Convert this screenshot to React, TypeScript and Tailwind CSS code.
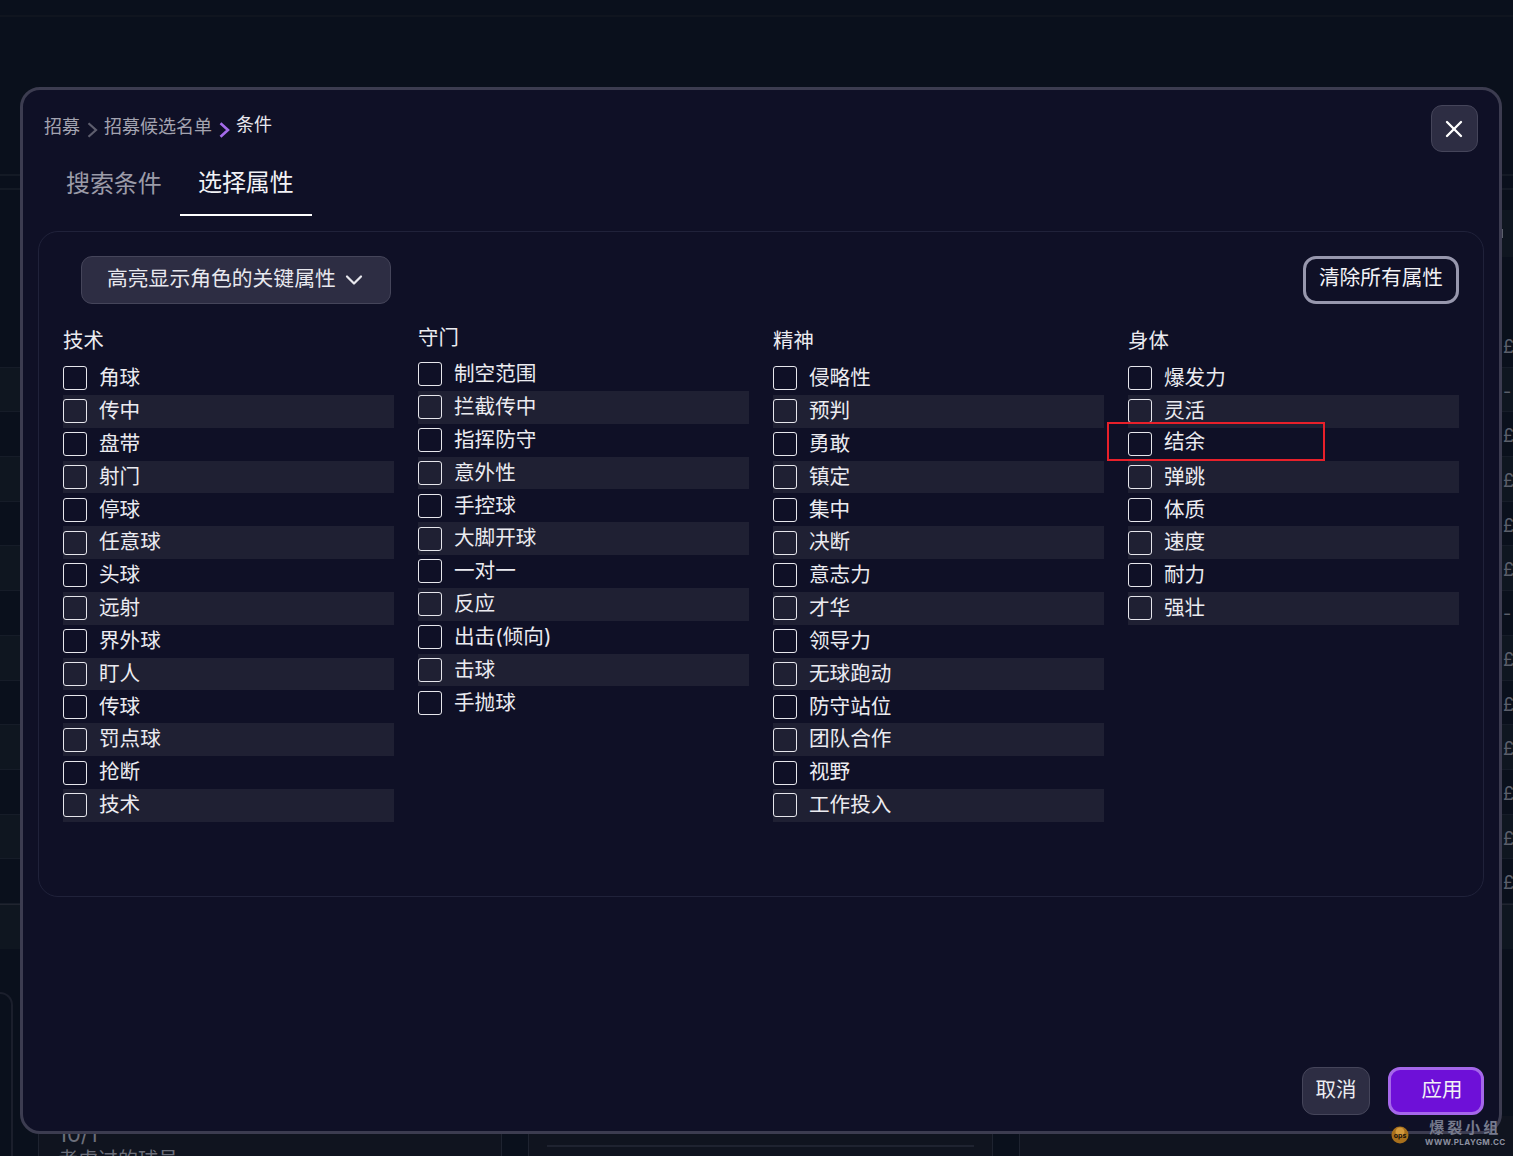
import { X, ChevronDown } from 'lucide-react'

const FONT = '"Inter", "Noto Sans CJK SC", sans-serif'

const COLUMNS = [
  {
    title: '技术',
    shift: false,
    items: ['角球', '传中', '盘带', '射门', '停球', '任意球', '头球', '远射', '界外球', '盯人', '传球', '罚点球', '抢断', '技术'],
  },
  {
    title: '守门',
    shift: true,
    items: ['制空范围', '拦截传中', '指挥防守', '意外性', '手控球', '大脚开球', '一对一', '反应', '出击(倾向)', '击球', '手抛球'],
  },
  {
    title: '精神',
    shift: false,
    items: ['侵略性', '预判', '勇敢', '镇定', '集中', '决断', '意志力', '才华', '领导力', '无球跑动', '防守站位', '团队合作', '视野', '工作投入'],
  },
  {
    title: '身体',
    shift: false,
    items: ['爆发力', '灵活', '结余', '弹跳', '体质', '速度', '耐力', '强壮'],
  },
]

const BG_ROWS = ['£1', '-', '£1', '£', '£', '£', '- £', '£', '£1', '£', '£', '£1', '£']

function BackdropRows() {
  return (
    <div className="flex flex-col">
      {BG_ROWS.map((t, i) => (
        <div
          key={i}
          className={`h-[44.7px] overflow-hidden whitespace-nowrap border-b border-[#161c28] pl-[1503px] text-[18px] leading-[48px] text-[#5b5f6b] ${
            i % 2 === 1 ? 'bg-[#0f1620]' : 'bg-[#0a101c]'
          }`}
        >
          {t}
        </div>
      ))}
    </div>
  )
}

function AttrRow({ label, index }: { label: string; index: number }) {
  return (
    <div
      className={`flex h-[32.85px] items-center gap-3 text-[20.6px] text-[#ebebf0] ${
        index % 2 === 1 ? 'bg-[#1f2033]' : ''
      }`}
    >
      <span className="h-6 w-6 shrink-0 rounded-[3px] border border-[#e6e6ec]" />
      <span className={`leading-none ${label === '结余' ? 'pb-[4px]' : ''}`}>{label}</span>
    </div>
  )
}

function Crumb({ color, width }: { color: string; width: number }) {
  return (
    <svg width="11" height="16" viewBox="0 0 11 16" fill="none" className="mx-[6.5px] mt-[5px] shrink-0">
      <path d="M1.5 1.2 L9 8 L1.5 14.8" stroke={color} strokeWidth={width} />
    </svg>
  )
}

function Watermark() {
  return (
    <div className="absolute left-[1385px] top-[1118px] flex items-start gap-[10px]">
      <svg width="30" height="30" viewBox="0 0 30 30" className="mt-[2px]">
        <g stroke="#15151c" strokeWidth="1" fill="none">
          <path d="M4 7 L9 10" />
          <path d="M14 1 L14.5 6" />
          <path d="M25 5 L21 9" />
          <path d="M2 16 C4 19 5 20 8 20" />
        </g>
        <circle cx="15" cy="15" r="8.5" fill="#a8701c" />
        <circle cx="15" cy="12" r="4.5" fill="#d49a3c" />
        <text x="15" y="18" textAnchor="middle" fontSize="7" fontWeight="700" fill="#17110a">ops</text>
      </svg>
      <div className="flex flex-col items-center">
        <span className="text-[15px] font-bold leading-[20px] tracking-[3px] text-[#777b8d]">爆裂小组</span>
        <span className="text-[8px] font-bold leading-[9px] tracking-[0.4px] text-[#8d90a0]">WWW.PLAYGM.CC</span>
      </div>
    </div>
  )
}

export default function App() {
  return (
    <div className="relative h-[1156px] w-[1513px] overflow-hidden bg-[#0a101c]" style={{ fontFamily: FONT }}>
      {/* page behind the dialog */}
      <div className="h-[17px] border-b-2 border-[#10151f]" />
      <div className="mt-[157px] h-[16px] border-y-2 border-[#141a25]" />
      <div className="ml-[1500px] mt-[20px] flex h-[47px] items-center bg-[#0f1620]">
        <span className="ml-[1px] h-[9px] w-[2px] bg-[#5b5f6b]" />
      </div>
      <div className="mt-[66px]">
        <BackdropRows />
      </div>
      <div className="h-[45px] border-t border-[#20242f] bg-[#0f1620]" />
      <div className="mt-[43px] h-[200px] w-[13px] rounded-tr-[20px] border-r-2 border-t-2 border-[#1b1f2c]" />

      <div className="absolute bottom-0 left-[38px] flex h-[40px] gap-[26px]">
        <div className="w-[464px] border-x border-[#1e2330] bg-[#10141f] pl-[19px] text-[#6b6e7a]">
          <div className="pt-[5px] text-[22px] leading-[26px]">10/1</div>
          <div className="text-[20px] leading-[26px]">考虑过的球员</div>
        </div>
        <div className="w-[465px] border-x border-[#1e2330] bg-[#10141f] px-[18px] pt-[29px]">
          <div className="h-[2px] bg-[#1f2330]" />
        </div>
        <div className="w-[500px] border-l border-[#1e2330] bg-[#10141f]" />
      </div>

      {/* dialog */}
      <div className="absolute left-[20px] top-[87px] flex h-[1047px] w-[1482px] flex-col rounded-[20px] border-[3px] border-[#3c3c50] bg-[#0f1026]">
        <div className="flex items-start justify-between pl-[21px] pr-[21px] pt-[15px]">
          <div className="flex items-center pt-[10px] text-[18px] leading-[24px] text-[#a3a3b0]">
            <span>招募</span>
            <Crumb color="#5e5e6e" width={2.2} />
            <span>招募候选名单</span>
            <Crumb color="#a46bea" width={2.6} />
            <span className="mt-[-4px] text-[#e8e8ee]">条件</span>
          </div>
          <button className="flex h-[47px] w-[47px] items-center justify-center rounded-[11px] border border-[#45455a] bg-[#2d2d43] pr-[1px] text-white">
            <X className="h-[28px] w-[28px]" strokeWidth={2} />
          </button>
        </div>

        <div className="mt-[-2px] flex pl-[26px] text-[24px] tracking-[-0.1px]">
          <div className="h-[66px] w-[131px] pl-[17px] pt-[16px] leading-[36px] text-[#9b9ba8]">搜索条件</div>
          <div className="h-[66px] w-[132px] border-b-2 border-white pl-[18px] pt-[15px] leading-[36px] text-[#f2f2f6]">选择属性</div>
        </div>

        <div className="ml-[15px] mt-[15px] h-[666px] w-[1446px] rounded-[20px] border border-[#20223a] pl-[24px] pr-[24px]">
          <div className="flex items-start justify-between pl-[18px] pt-[24px]">
            <button className="flex h-[48px] w-[310px] items-center gap-[4px] rounded-[11px] border border-[#45455a] bg-[#2d2d43] pl-[25px] text-[20.8px] text-[#e8e8ee]">
              <span className="pb-[2px]">高亮显示角色的关键属性</span>
              <ChevronDown className="h-[28px] w-[28px]" strokeWidth={1.9} />
            </button>
            <button className="h-[48px] w-[156px] rounded-[13px] border-[3px] border-[#9797ad] pb-[5px] text-[20.7px] text-[#f2f2f6]">
              清除所有属性
            </button>
          </div>
          <div className="mt-[20px] grid grid-cols-4 items-start gap-x-[24px]">
            {COLUMNS.map((col) => (
              <div key={col.title} className={col.shift ? 'mt-[-4px]' : ''}>
                <div className={`h-[38px] text-[20.4px] leading-[32px] text-[#ebebf0] ${col.shift ? 'pt-[2px]' : 'pt-[1px]'}`}>
                  {col.title}
                </div>
                {col.items.map((item, i) => (
                  <AttrRow key={item} label={item} index={i} />
                ))}
              </div>
            ))}
          </div>
        </div>

        <div className="mr-[15px] mt-[170px] flex justify-end gap-[18px]">
          <button className="h-[48px] w-[68px] rounded-[12px] border border-[#45455a] bg-[#2d2d43] pb-[2px] text-[20.5px] text-[#ebebf0]">
            取消
          </button>
          <button className="h-[48px] w-[96px] rounded-[12px] border-[3px] border-[#a567ea] bg-[#6e10d8] pb-[2px] pl-[12px] text-[20.5px] text-[#f2f2f6]">
            应用
          </button>
        </div>
      </div>

      {/* annotation drawn on the screenshot */}
      <div className="absolute left-[1107px] top-[422px] h-[39px] w-[218px] border-2 border-[#e8202a]" />
      <Watermark />
    </div>
  )
}
